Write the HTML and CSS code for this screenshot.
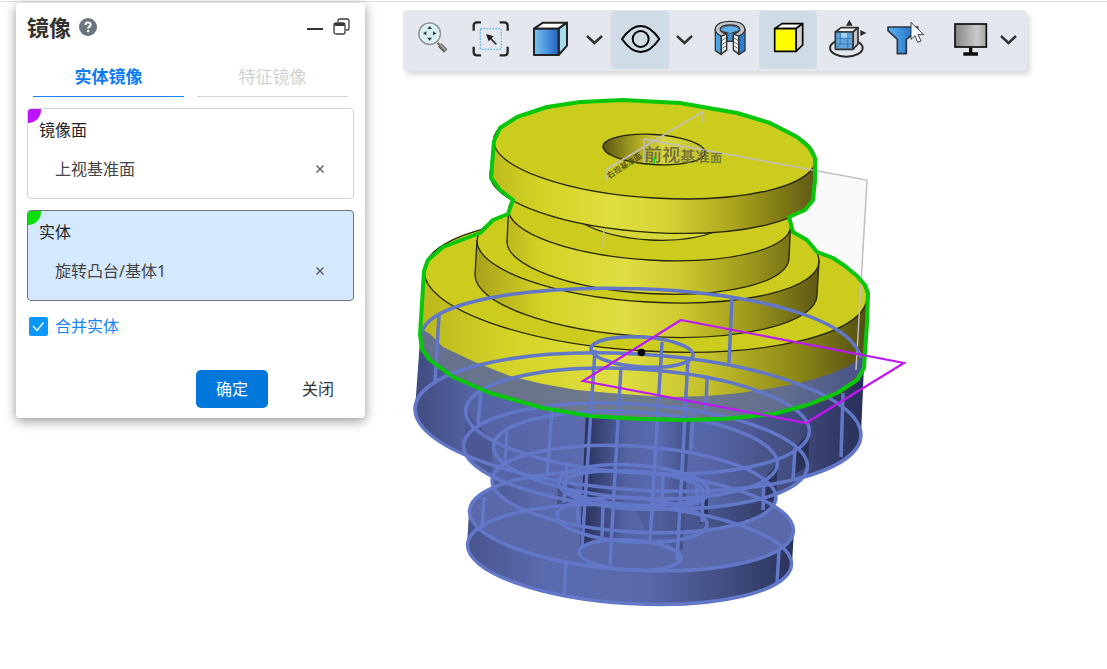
FILE: index.html
```html
<!DOCTYPE html>
<html lang="zh-CN">
<head>
<meta charset="utf-8">
<meta name="viewport" content="width=device-width, initial-scale=1">
<title>镜像</title>
<link rel="stylesheet" href="styles.css">
</head>
<body>
<main class="app">
  <form class="panel" aria-label="镜像">
    <header class="panel-head">
      <h1 class="panel-title">镜像</h1>
      <button type="button" class="icon-btn" aria-label="帮助">
        <svg width="18" height="18" viewBox="0 0 18 18"><circle cx="9" cy="9" r="9" fill="#6b747d"/><path d="M6.400 7Q6.500 4.600 9 4.600T11.600 6.800Q11.600 8 10.200 8.800Q9.100 9.400 9.100 10.600" fill="none" stroke="#fff" stroke-width="2"/><circle cx="9.100" cy="13.100" r="1.300" fill="#fff"/></svg>
      </button>
      <span class="spacer"></span>
      <button type="button" class="icon-btn" aria-label="最小化">
        <svg width="16" height="18" viewBox="0 0 16 18"><path d="M0 11H16" stroke="#333" stroke-width="2"/></svg>
      </button>
      <button type="button" class="icon-btn" aria-label="还原">
        <svg width="17" height="18" viewBox="0 0 17 18" fill="none" stroke="#3a3a3a" stroke-width="1.300"><path d="M5 4V3Q5 1 7 1H14Q16 1 16 3V10Q16 12 14 12H13"/><rect x="1" y="5" width="11" height="11" rx="2"/><path d="M1.500 6.500H11.500" stroke-width="3"/></svg>
      </button>
    </header>

    <div class="tabs" role="tablist">
      <button type="button" class="tab tab-active" role="tab" aria-selected="true">实体镜像</button>
      <button type="button" class="tab" role="tab" aria-selected="false">特征镜像</button>
    </div>

    <section class="pick pick-plane">
      <h2 class="pick-label">镜像面</h2>
      <div class="pick-row"><span>上视基准面</span><button type="button" class="remove" aria-label="移除上视基准面"><svg width="8" height="8" viewBox="0 0 8 8"><path d="M.5.5L7.500 7.500M7.500.5L.5 7.500" stroke="#555" stroke-width="1.300"/></svg></button></div>
    </section>
    <section class="pick pick-body pick-current">
      <h2 class="pick-label">实体</h2>
      <div class="pick-row"><span>旋转凸台/基体1</span><button type="button" class="remove" aria-label="移除旋转凸台/基体1"><svg width="8" height="8" viewBox="0 0 8 8"><path d="M.5.5L7.500 7.500M7.500.5L.5 7.500" stroke="#555" stroke-width="1.300"/></svg></button></div>
    </section>

    <div class="merge">
      <span class="check"><input type="checkbox" id="merge" class="check-box" checked><svg class="check-mark" width="19" height="19" viewBox="0 0 19 19"><path d="M4 9L8 13.500L14.500 5.500" fill="none" stroke="#fff" stroke-width="1.300"/></svg></span>
      <label for="merge">合并实体</label>
    </div>

    <footer class="actions">
      <button type="submit" class="btn btn-primary">确定</button>
      <button type="button" class="btn">关闭</button>
    </footer>
  </form>

  <section class="viewport">
    <div class="toolbar" role="toolbar" aria-label="视图">
      <button type="button" class="tool" aria-label="缩放">
        <svg class="tool-icon" viewBox="45 56 132 132"><path d="M128 130L136 139" stroke="#777" stroke-width="7"/><path d="M134 137L152 155" stroke="#5c5c5c" stroke-width="14"/><path d="M135 136L151 152" stroke="#a2a2a2" stroke-width="6"/><circle cx="104" cy="103" r="32" fill="#d3eef4" stroke="#8f9497" stroke-width="5"/><circle cx="104" cy="103" r="28" fill="none" stroke="#f6fdff" stroke-width="3"/><path d="M104 80l7 9h-14zM104 124l7-9h-14zM84 102l10-6v12zM124 102l-10-6v12z" fill="#333"/></svg>
      </button>
      <button type="button" class="tool" aria-label="框选">
        <svg class="tool-icon" viewBox="219 56 132 132" fill="none"><path d="M236 94V79Q236 69 246 69H258M314 69H327Q338 69 338 79V94M236 142V157Q236 168 246 168H258M314 168H327Q338 168 338 157V142" stroke="#262626" stroke-width="7"/><rect x="256" y="88" width="63" height="62" stroke="#62b8f0" stroke-width="4" stroke-dasharray="5 4"/><path d="M304 135L284 115" stroke="#333" stroke-width="5"/><path d="M273 104L296 111L281 126Z" fill="#222"/></svg>
      </button>
      <button type="button" class="tool" aria-label="显示样式">
        <svg class="tool-icon" viewBox="393 56 132 132"><defs><linearGradient id="cubeBlue"><stop offset="0" stop-color="#78c5f3"/><stop offset="1" stop-color="#2363c5"/></linearGradient></defs><g stroke="#222" stroke-width="6" stroke-linejoin="round"><path d="M417 88L444 70H516L491 88Z" fill="#fff"/><path d="M491 88L516 70V139L491 167Z" fill="#a6ddea"/><path d="M417 88H491V167H417Z" fill="url(#cubeBlue)"/></g></svg>
      </button>
      <button type="button" class="more more-wide" aria-label="更多显示样式"><svg width="17" height="10" viewBox="0 0 17 10"><path d="M1 1L8.500 8L16 1" fill="none" stroke="#333" stroke-width="2.400"/></svg></button>
      <button type="button" class="tool tool-on" aria-label="可见性">
        <svg class="tool-icon" viewBox="669 56 132 132" fill="none" stroke="#000" stroke-width="6"><path d="M681 119Q708 80 737 80T793 119Q766 158 737 158T681 119Z" stroke-linejoin="round"/><circle cx="737" cy="119" r="24"/></svg>
      </button>
      <button type="button" class="more" aria-label="更多可见性"><svg width="17" height="10" viewBox="0 0 17 10"><path d="M1 1L8.500 8L16 1" fill="none" stroke="#333" stroke-width="2.400"/></svg></button>
      <button type="button" class="tool" aria-label="剖视图">
        <svg class="tool-icon" viewBox="-21 56 132 132" stroke="#333" stroke-width="4" stroke-linejoin="round"><path d="M17 98V137L29 126H59L73 137V98Z" fill="#3d90d8"/><path d="M36 110V127M54 110V127" fill="none"/><path d="M1 90V154L19 166V108Z" fill="#49a4e6"/><path d="M90 90V154L71 166V108Z" fill="#2b7fd0"/><path d="M19 110L35 104V153L19 165Z" fill="#eee"/><path d="M71 110L55 104V153L71 165Z" fill="#eee"/><path d="M20 124L34 115M20 136L34 127M20 148L34 139M20 160L34 151M70 124L56 115M70 136L56 127M70 148L56 139M70 160L56 151" stroke-width="2"/><path d="M19 110C-12 98-4 66 45 66S103 98 71 110L55 104C86 96 78 77 45 77S4 96 35 104Z" fill="#c5c6c8"/><path d="M15 91Q24 79 45 79T75 91Q65 98 54 99Q45 106 36 99Q24 98 15 91Z" fill="#60b2ec" stroke-width="2"/></svg>
      </button>
      <button type="button" class="tool tool-on" aria-label="实体着色">
        <svg class="tool-icon" viewBox="153 56 132 132" stroke="#000" stroke-width="5" stroke-linejoin="round"><path d="M179 88L201 73H263L243 88Z" fill="#fff"/><path d="M243 88L263 73V137L243 156Z" fill="#cfcfcf"/><path d="M179 88H243V156H179Z" fill="#ff0"/></svg>
      </button>
      <button type="button" class="tool" aria-label="视图定向">
        <svg class="tool-icon" viewBox="327 56 132 132"><ellipse cx="394" cy="146" rx="49" ry="26" fill="none" stroke="#2b2b2b" stroke-width="6"/><g stroke="#333" stroke-width="5" stroke-linejoin="round"><path d="M361 98L378 85H429L414 98Z" fill="#f7f7f7"/><path d="M414 98L429 85V134L414 150Z" fill="#c4c4c4"/><path d="M361 98H414V150H361Z" fill="#62a4dc"/></g><path d="M361 134H376V98M376 134L362 149M376 134H413M362 117H413M398 99V149" fill="none" stroke="#2869a6" stroke-width="2"/><path d="M378 101H397V115H378Z" fill="#a0cff0"/><path d="M403 61L413 79H393ZM454 101L436 92V110Z" fill="#2b2b2b"/></svg>
      </button>
      <button type="button" class="tool" aria-label="选择过滤">
        <svg class="tool-icon" viewBox="501 56 132 132"><defs><linearGradient id="funnel"><stop offset="0" stop-color="#5ab1ee"/><stop offset="1" stop-color="#1c66bd"/></linearGradient></defs><path d="M519 83H608V94L574 120V163H547V120L519 94Z" fill="url(#funnel)" stroke="#2d3640" stroke-width="5" stroke-linejoin="round"/><path d="M588 69V120L600 109L608 129L618 125L609 106H626Z" fill="#fff" stroke="#3c3c3c" stroke-width="3" stroke-linejoin="round"/></svg>
      </button>
      <button type="button" class="tool tool-screen" aria-label="显示">
        <svg class="tool-icon" viewBox="699 56 132 132"><defs><linearGradient id="screen"><stop offset="0" stop-color="#858585"/><stop offset=".7" stop-color="#c9c9c9"/><stop offset="1" stop-color="#a5a5a5"/></linearGradient></defs><rect x="720" y="74" width="94" height="69" fill="url(#screen)" stroke="#0c0c0c" stroke-width="5"/><path d="M767 144V162M745 164H789" stroke="#0c0c0c" stroke-width="10"/></svg>
      </button>
      <button type="button" class="more more-end" aria-label="更多显示"><svg width="17" height="10" viewBox="0 0 17 10"><path d="M1 1L8.500 8L16 1" fill="none" stroke="#333" stroke-width="2.400"/></svg></button>
    </div>

    <svg class="model" viewBox="403 80 704 589" role="img" aria-label="旋转凸台镜像预览">
      <defs>
        <linearGradient id="y1" gradientUnits="userSpaceOnUse" x1="490" x2="815" y1="0" y2="0"><stop offset="0" stop-color="#bdb91e"/><stop offset=".15" stop-color="#d2d224"/><stop offset=".38" stop-color="#e0df40"/><stop offset=".55" stop-color="#d4d235"/><stop offset=".75" stop-color="#aaa51c"/><stop offset=".9" stop-color="#7d7714"/><stop offset="1" stop-color="#5f591b"/></linearGradient>
        <linearGradient id="y2" gradientUnits="userSpaceOnUse" x1="475" x2="818" y1="0" y2="0"><stop offset="0" stop-color="#a8a21a"/><stop offset=".2" stop-color="#d3d326"/><stop offset=".43" stop-color="#dfde42"/><stop offset=".6" stop-color="#cdc92e"/><stop offset=".8" stop-color="#9d981b"/><stop offset="1" stop-color="#5e5815"/></linearGradient>
        <linearGradient id="y3" gradientUnits="userSpaceOnUse" x1="421" x2="867" y1="0" y2="0"><stop offset="0" stop-color="#bbb71d"/><stop offset=".2" stop-color="#d4d427"/><stop offset=".45" stop-color="#dfde42"/><stop offset=".65" stop-color="#c2be2b"/><stop offset=".85" stop-color="#8a8517"/><stop offset="1" stop-color="#534e12"/></linearGradient>
        <linearGradient id="b1" gradientUnits="userSpaceOnUse" x1="467" x2="794" y1="0" y2="0"><stop offset="0" stop-color="#48548d"/><stop offset=".25" stop-color="#5b6bb0"/><stop offset=".55" stop-color="#5868aa"/><stop offset=".8" stop-color="#414d80"/><stop offset="1" stop-color="#29325a"/></linearGradient>
        <linearGradient id="b2" gradientUnits="userSpaceOnUse" x1="415" x2="863" y1="0" y2="0"><stop offset="0" stop-color="#414b80"/><stop offset=".12" stop-color="#5362a1"/><stop offset=".4" stop-color="#5c6cb2"/><stop offset=".65" stop-color="#5666a8"/><stop offset=".85" stop-color="#414b7c"/><stop offset="1" stop-color="#28305a"/></linearGradient>
        <linearGradient id="bore" gradientUnits="userSpaceOnUse" x1="588" x2="684" y1="0" y2="0"><stop offset="0" stop-color="#2e3763"/><stop offset=".4" stop-color="#5363a4"/><stop offset=".75" stop-color="#5a6ab0"/><stop offset="1" stop-color="#46538b"/></linearGradient>
        <linearGradient id="hole"><stop offset="0" stop-color="#5a5412"/><stop offset=".35" stop-color="#b1ad23"/><stop offset=".6" stop-color="#d6d542"/><stop offset="1" stop-color="#c4c12a"/></linearGradient>
        <linearGradient id="veil" gradientUnits="userSpaceOnUse" x1="420" x2="864" y1="0" y2="0"><stop offset="0" stop-color="#65708d"/><stop offset=".5" stop-color="#707b8a"/><stop offset=".8" stop-color="#646f91"/><stop offset="1" stop-color="#495386"/></linearGradient>
      </defs>

      <path d="M644 139L867 180L856 370L842 405H800V168Z" fill="#fafafa"/>

      <!-- mirrored body, lowest disc first -->
      <g fill="#5868a9">
        <path d="M469 512L467 545A162 49 3.650 0 0 792 564L794 530Z" fill="url(#b1)"/>
        <ellipse rx="162" ry="49" transform="matrix(1 .058 0 1 631.500 521)"/>
        <path d="M494 447L492 481A141 43 3.650 0 0 776 497L778 463Z" fill="url(#b1)"/>
        <path d="M465 411L463 446A172 52 3.650 0 0 808 466L810 431Z" fill="url(#b2)"/>
        <path d="M420 340L415 409A222 68 3.650 0 0 861 435L864 365Z" fill="url(#b2)"/>
      </g>
      <path d="M465 410V447Q480 470 492 473V440Z" fill="#46528a" opacity=".6"/>
      <path d="M810 431L808 466L793 475L795 448ZM778 463L776 497L764 505V479Z" fill="#252d53" opacity=".8"/>
      <path d="M590 400L582 546Q592 536 625 538L677 550L688 400Z" fill="url(#bore)"/>
      <path d="M588 410L582 546" stroke="#2b3459" stroke-width="4"/>
      <path d="M689 412L681 550" stroke="#434f85" stroke-width="3"/>
      <path d="M634 507Q690 505 707 492V520Q690 537 650 539Z" fill="#46538c" opacity=".5"/>
      <path d="M702 500L708 495V516L700 524Z" fill="#2b345a"/>
      <path d="M558 478L576 488L572 505L557 509Z" fill="#465289"/>

      <!-- selected body -->
      <g stroke="#272607" stroke-width="1.300" fill="#cccc1e">
        <path d="M424 271L420 339A221 67 3.650 0 0 864 365L867 297Z" fill="url(#y3)" stroke="none"/>
        <ellipse rx="221.500" ry="67" transform="matrix(1 .058 0 1 645.500 284)"/>
        <path d="M477 241L475 275A170 51 3.650 0 0 817 295L819 261Z" fill="url(#y2)"/>
        <ellipse rx="171" ry="51" transform="matrix(1 .058 0 1 648 251)"/>
        <path d="M508.500 210L507 242A140 43 3.650 0 0 789 258L790.500 226Z" fill="url(#y2)"/>
        <ellipse rx="141" ry="42" transform="matrix(1 .058 0 1 649.500 218)"/>
        <path d="M582 223Q610 238 650 240T717 231V215H582Z" fill="#d8d73a"/>
        <path d="M493.500 141L490 175A161 48 3.650 0 0 814 193L815.500 159Z" fill="url(#y1)"/>
        <ellipse rx="161" ry="48" transform="matrix(1 .058 0 1 654.500 150)"/>
        <ellipse rx="51" ry="15" transform="matrix(1 .058 0 1 654 149.500)" fill="url(#hole)"/>
      </g>
      <path d="M420 328L430 334L443 347L477 363L510 376L543 384L577 390L610 393L650 396L673 397L707 396L740 393L773 388L800 383L827 375L847 367L866 355L863 371L837 393L807 405L773 414L723 419L683 420L640 419L590 416L543 408L490 393L453 377L430 360L420 342Z" fill="url(#veil)"/>

      <!-- reference planes and their labels -->
      <g fill="none" stroke="#bfbfbf" stroke-width="1.500">
        <path d="M644 139L867 180L856 370M644 139V163"/>
        <path d="M607 180V169L702 112V122M604 229L603 247"/>
      </g>
      <g class="plane-label"><text transform="translate(644 161) rotate(1)"><tspan class="near">前视</tspan><tspan class="mid">基准</tspan><tspan class="far">面</tspan></text><text class="side" transform="translate(609 179) rotate(-33)">右视基准面</text></g>
      <path d="M654 157V164" stroke="#1be01b" stroke-width="2"/>

      <!-- preview wireframe -->
      <g class="wire">
        <path d="M422 332C440 268 838 272 861 358"/>
        <ellipse rx="223" ry="68" transform="matrix(1 .058 0 1 638 422)"/>
        <ellipse rx="172" ry="52" transform="matrix(1 .058 0 1 637.500 421)"/>
        <ellipse rx="172" ry="52" transform="matrix(1 .058 0 1 635.500 456)"/>
        <ellipse rx="142" ry="43" transform="matrix(1 .058 0 1 635.500 455)"/>
        <ellipse rx="142" ry="43" transform="matrix(1 .058 0 1 634 489)"/>
        <ellipse rx="162" ry="49" transform="matrix(1 .058 0 1 631.500 521)"/>
        <ellipse rx="162" ry="49" transform="matrix(1 .058 0 1 629.500 554.500)"/>
        <ellipse rx="75" ry="22" transform="matrix(1 .058 0 1 633.500 487)"/>
        <ellipse rx="70" ry="17" transform="matrix(1 .058 0 1 633.500 488)"/>
        <ellipse rx="75" ry="22" transform="matrix(1 .058 0 1 632 520)"/>
        <ellipse rx="51" ry="15" transform="matrix(1 .058 0 1 642 352)"/>
        <ellipse rx="51" ry="15" transform="matrix(1 .058 0 1 630 555)"/>
        <path d="M439 315L435 381M481 392L478 424M507 432L505 463M552 410L547 475M595 350L582 547M621 367L610 565M662 342L650 543M688 358L677 560M707 377L706 410M693 412L691 450M732 298L729 363M843 393L841 457M795 448L793 481M764 478L763 510M779 550L777 583M484 497L482 528M566 562L564 594M567 465L564 503M578 490V523M603 507L602 537M663 473L662 507M697 485V505M703 498L702 522"/>
      </g>

      <path class="outline" d="M494 141L500 128L517 117L547 107L580 102L623 100L680 103L703 107L737 113L770 123L797 137L809 147L815 158V180L813 200L805 210L789 217L793 232L807 240L817 252L833 258L845 266L857 276L865 285L868 293L867 323L864 368L857 380L837 393L807 405L773 414L723 419L683 420L640 419L590 416L543 408L490 393L453 377L430 360L422 349L420 335L424 271L428 260L443 247L480 233L493 220L508 214L513 200L500 190L491 178Z"/>
      <path d="M681 320L904 363L806 423L583 381Z" fill="none" stroke="#bd18f5" stroke-width="2.200"/>
      <circle cx="641.500" cy="352.500" r="3.800" fill="#000"/>
    </svg>
  </section>
</main>
</body>
</html>
```
FILE: styles.css
```css
* { box-sizing: border-box; }

body {
  margin: 0;
  padding-top: 1px;
  background: #fff;
  color: #333;
  font: 16px/22px "Noto Sans", "Noto Sans CJK SC", sans-serif;
}

button {
  padding: 0;
  border: 0;
  background: none;
  color: inherit;
  font: inherit;
  cursor: pointer;
}

svg { display: block; }

.app {
  display: grid;
  grid-template-columns: 349fr 704fr;
  column-gap: 38px;
  align-items: start;
  padding-left: 16px;
  border-top: 1px solid #dfe2e5;
}

.panel {
  margin-top: 1px;
  padding: 10px 11px;
  border-radius: 4px;
  background: #fff;
  box-shadow: 0 3px 12px rgba(0, 0, 0, .42);
}

.panel-head {
  display: flex;
  align-items: center;
  gap: 8px;
  height: 28px;
  padding-right: 4px;
}

.panel-title {
  margin: 0;
  font-size: 22px;
  line-height: 28px;
  font-weight: 700;
}

.spacer { flex: 1; }
.icon-btn + .icon-btn { margin-left: 2px; }

.tabs {
  display: grid;
  grid-template-columns: 1fr 1fr;
  gap: 13px;
  margin: 18px 6px 11px;
}

.tab {
  height: 38px;
  padding-bottom: 1px;
  border-bottom: 1px solid #d5d5d5;
  color: #d2d2d2;
  font-size: 17px;
}

.tab-active {
  border-color: #1583fb;
  color: #0b7bf7;
  font-weight: 700;
}

.pick {
  position: relative;
  height: 91px;
  padding: 10px 11px;
  border: 1px solid #d6d2d4;
  border-radius: 4px;
  overflow: hidden;
}

.pick::before {
  content: "";
  position: absolute;
  top: 0;
  left: 0;
  width: 13px;
  height: 14px;
  border-bottom-right-radius: 13px;
  background: #bd12fb;
}

.pick-current {
  margin-top: 11px;
  border-color: #70757c;
  background: #d4e8fe;
}

.pick-body::before { background: #0be00b; }

.pick-label {
  position: relative;
  margin: 0;
  color: #222;
  font-size: 16px;
  font-weight: 400;
}

.pick-row {
  display: flex;
  align-items: center;
  justify-content: space-between;
  margin-top: 17px;
  padding: 0 18px 0 16px;
  color: #444;
}

.merge {
  display: flex;
  align-items: center;
  gap: 7px;
  margin: 14px 2px 0;
  color: #1683fa;
}

.check { display: grid; }

.check-box,
.check-mark { grid-area: 1 / 1; }

.check-box {
  appearance: none;
  width: 19px;
  height: 19px;
  margin: 0;
  border-radius: 2px;
  background: #0b98fd;
}

.check-mark { pointer-events: none; }

.actions {
  display: flex;
  justify-content: flex-end;
  gap: 14px;
  margin-top: 33px;
}

.btn {
  height: 38px;
  padding: 0 20px;
  border-radius: 5px;
}

.btn-primary {
  background: #0078db;
  color: #fff;
}

.toolbar {
  display: inline-flex;
  align-items: center;
  margin-top: 8px;
  padding: 1px 0 2px;
  border-radius: 4px;
  background: #e4e7ee;
  box-shadow: 3px 4px 5px rgba(0, 0, 0, .14);
  vertical-align: top;
}

.tool {
  padding: 7px;
  border-radius: 4px;
}

.tool-on { background: #cfdce5; }
.tool-screen { margin-left: 8px; }

.tool-icon {
  width: 44px;
  height: 44px;
}

.more { padding: 0 8px 0 7px; }
.more-wide { padding: 0 8px 0 9px; }
.more-end { padding: 0 10px 0 1px; }

.model {
  width: 100%;
  height: auto;
  margin-top: 9px;
}

.wire {
  fill: none;
  stroke: #6277c8;
  stroke-width: 3.5;
}

.outline {
  fill: none;
  stroke: #08c70b;
  stroke-width: 4;
  stroke-linejoin: round;
}

.plane-label { fill: #73713c; font-weight: 500; }
.near { font-size: 18px; }
.mid { font-size: 15px; }
.far { font-size: 12px; }
.side { fill: #4d4b16; font-size: 8px; }
```
